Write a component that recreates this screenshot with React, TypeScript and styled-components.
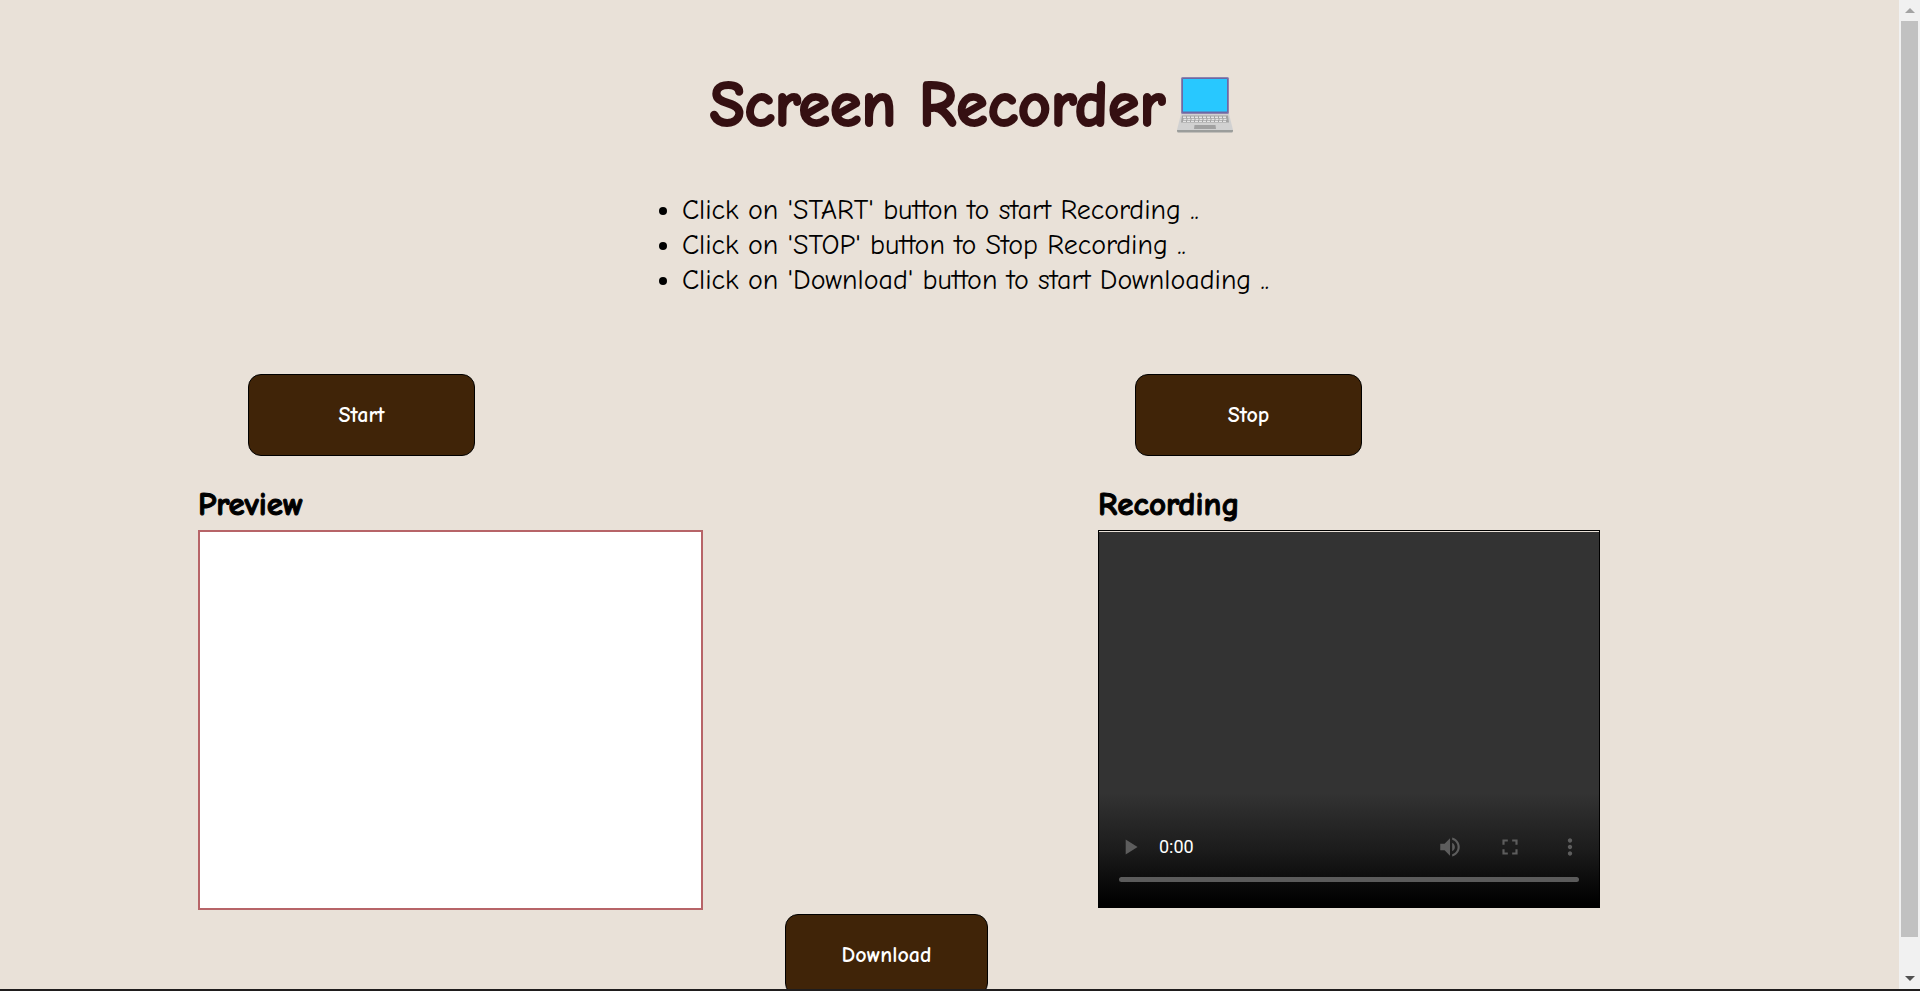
import React from 'react';
import styled, { createGlobalStyle } from 'styled-components';

const GlobalStyle = createGlobalStyle`
  *, *::before, *::after { box-sizing: border-box; }
  body {
    margin: 0;
    font-family: "Comic Neue", "Comic Sans MS", Lato, sans-serif;
    font-variant-ligatures: none;
    color: #000;
    background: #e9e1d8;
  }
`;

const Window = styled.div`
  display: flex;
  height: 100vh;
  border-bottom: 2px solid #1f1d1d;
  overflow: hidden;
`;

const Page = styled.main`
  flex: 1;
  min-width: 0;
  overflow-x: hidden;
  overflow-y: auto;
  scrollbar-width: none;
`;

const Title = styled.h1`
  display: flex;
  justify-content: center;
  align-items: center;
  gap: 12px;
  margin: 0;
  padding: 67px 0 0 44px;
  font-size: 64px;
  line-height: 76px;
  font-weight: 700;
  color: #351012;
  -webkit-text-stroke: 2px #351012;
`;

const LaptopIcon = styled.svg`
  width: 56px;
  height: 56px;
`;

const Steps = styled.ul`
  width: fit-content;
  margin: 50px auto 0;
  padding: 0 0 0 52px;
  font-size: 28px;
  line-height: 35px;
`;

const Columns = styled.div`
  display: grid;
  grid-template-columns: 198fr 505fr 395fr 502fr 299fr;
  margin-top: 76px;
`;

const Column = styled.section<{ $track: number }>`
  grid-column: ${(p) => p.$track};
  min-width: 0;
`;

const ActionButton = styled.button<{ $size?: 'small' }>`
  display: block;
  width: ${(p) => (p.$size === 'small' ? 203 : 227)}px;
  height: 82px;
  border: 1px solid #000;
  border-radius: 13px;
  background: #402408;
  color: #fff;
  font-family: inherit;
  font-size: 22px;
  font-weight: 700;
  cursor: pointer;
`;

const ButtonRow = styled.div<{ $indent: string }>`
  padding-left: ${(p) => p.$indent};
`;

const PanelTitle = styled.h2`
  margin: 28px 0 6px;
  font-size: 33px;
  line-height: 40px;
  font-weight: 700;
  -webkit-text-stroke: 1px #000;
`;

const Preview = styled.div`
  height: 380px;
  border: 2px solid #b76468;
  background: #fff;
`;

const Player = styled.div`
  display: flex;
  flex-direction: column;
  justify-content: flex-end;
  height: 378px;
  border: 1px solid #000;
  background: linear-gradient(#e9e1d8 1px, transparent 1px),
    linear-gradient(#333 262px, #1c1c1c 318px, #000 372px);
`;

const Controls = styled.div`
  display: flex;
  align-items: center;
  padding: 0 16px 0 18px;
`;

const Time = styled.span`
  flex: 1;
  margin-left: 16px;
  font-family: Roboto, sans-serif;
  font-size: 18px;
  line-height: 24px;
  color: #fff;
`;

const IconButton = styled.button<{ $gap?: number }>`
  display: flex;
  margin: 0 0 0 ${(p) => p.$gap ?? 0}px;
  padding: 0;
  border: 0;
  background: none;
  color: #5d5d5d;

  svg {
    width: 26px;
    height: 26px;
    fill: currentColor;
  }
`;

const Seek = styled.input`
  appearance: none;
  height: 5px;
  margin: 17px 20px 25px;
  border-radius: 3px;
  background: #5b5b5b;

  &::-webkit-slider-thumb {
    appearance: none;
    width: 0;
    height: 0;
  }
`;

const DownloadRow = styled.div`
  display: flex;
  justify-content: center;
  padding: 4px 126px 48px 0;
`;

const ScrollRail = styled.div`
  display: flex;
  flex-direction: column;
  align-items: center;
  width: 21px;
  background: #f1f1f1;
`;

const ScrollArrow = styled.button<{ $color: string }>`
  display: flex;
  align-items: center;
  justify-content: center;
  width: 21px;
  height: 21px;
  padding: 0;
  border: 0;
  background: none;
  color: ${(p) => p.$color};

  svg {
    width: 10px;
    height: 5px;
    fill: currentColor;
  }
`;

const ScrollTrack = styled.div`
  flex: 1;
  width: 17px;
`;

const ScrollThumb = styled.div`
  height: 96.7%;
  background: #c1c1c1;
`;

const keys = Array.from({ length: 11 }, (_, i) => 6 + i * 4);

const Laptop = () => (
  <LaptopIcon viewBox="0 0 56 56" role="img" aria-label="Laptop">
    <rect x="4" y="0" width="48" height="37" rx="1.5" fill="#8d83b0" />
    <rect x="5" y="1" width="46" height="35" rx="1" fill="#6c68a4" />
    <rect x="6" y="2" width="44" height="32.5" fill="#28c8ff" />
    <path d="M4 37h48l4 16H0z" fill="#d1d1d1" />
    <path d="M0 53h56v1q0 1.500-1.500 1.500h-53Q0 55.500 0 54z" fill="#9b9d9b" />
    <path d="M5 38.500h46l1 7H4z" fill="#a2a2a2" />
    {keys.map((x) => (
      <g key={x} fill="#e4e4e4">
        <rect x={x} y="39.500" width="3" height="1.500" />
        <rect x={x + 0.5} y="41.700" width="3" height="1.300" />
        <rect x={x} y="43.700" width="3" height="1.300" />
      </g>
    ))}
    <path d="M17.500 48h21l.5 4H17z" fill="#a1a1a1" />
  </LaptopIcon>
);

export default function App() {
  return (
    <>
      <GlobalStyle />
      <Window>
        <Page>
          <Title>
            Screen Recorder
            <Laptop />
          </Title>
          <Steps>
            <li>Click on 'START' button to start Recording ..</li>
            <li>Click on 'STOP' button to Stop Recording ..</li>
            <li>Click on 'Download' button to start Downloading ..</li>
          </Steps>
          <Columns>
            <Column $track={2}>
              <ButtonRow $indent="50px">
                <ActionButton type="button">Start</ActionButton>
              </ButtonRow>
              <PanelTitle>Preview</PanelTitle>
              <Preview />
            </Column>
            <Column $track={4}>
              <ButtonRow $indent="37px">
                <ActionButton type="button">Stop</ActionButton>
              </ButtonRow>
              <PanelTitle>Recording</PanelTitle>
              <Player role="group" aria-label="Recording player">
                <Controls>
                  <IconButton type="button" aria-label="Play">
                    <svg viewBox="0 0 24 24"><path d="M8 5v14l11-7z" /></svg>
                  </IconButton>
                  <Time>0:00</Time>
                  <IconButton type="button" aria-label="Mute">
                    <svg viewBox="0 0 24 24">
                      <path d="M3 9v6h4l5 5V4L7 9H3zm13.500 3c0-1.770-1.020-3.290-2.500-4.030v8.050c1.480-.73 2.500-2.250 2.500-4.020zM14 3.230v2.060c2.890.86 5 3.540 5 6.710s-2.110 5.850-5 6.710v2.060c4.010-.91 7-4.490 7-8.770s-2.990-7.860-7-8.770z" />
                    </svg>
                  </IconButton>
                  <IconButton type="button" aria-label="Full screen" $gap={34}>
                    <svg viewBox="0 0 24 24">
                      <path d="M7 14H5v5h5v-2H7v-3zm-2-4h2V7h3V5H5v5zm12 7h-3v2h5v-5h-2v3zM14 5v2h3v3h2V5h-5z" />
                    </svg>
                  </IconButton>
                  <IconButton type="button" aria-label="More options" $gap={34}>
                    <svg viewBox="0 0 24 24">
                      <path d="M12 8c1.100 0 2-.9 2-2s-.9-2-2-2-2 .9-2 2 .9 2 2 2zm0 2c-1.100 0-2 .9-2 2s.9 2 2 2 2-.9 2-2-.9-2-2-2zm0 6c-1.100 0-2 .9-2 2s.9 2 2 2 2-.9 2-2-.9-2-2-2z" />
                    </svg>
                  </IconButton>
                </Controls>
                <Seek type="range" min={0} max={100} defaultValue={0} aria-label="Seek" />
              </Player>
            </Column>
          </Columns>
          <DownloadRow>
            <ActionButton type="button" $size="small">Download</ActionButton>
          </DownloadRow>
        </Page>
        <ScrollRail>
          <ScrollArrow type="button" aria-label="Scroll up" $color="#a3a3a3">
            <svg viewBox="0 0 10 5"><path d="M5 0l5 5H0z" /></svg>
          </ScrollArrow>
          <ScrollTrack>
            <ScrollThumb />
          </ScrollTrack>
          <ScrollArrow type="button" aria-label="Scroll down" $color="#505050">
            <svg viewBox="0 0 10 5"><path d="M0 0h10L5 5z" /></svg>
          </ScrollArrow>
        </ScrollRail>
      </Window>
    </>
  );
}
